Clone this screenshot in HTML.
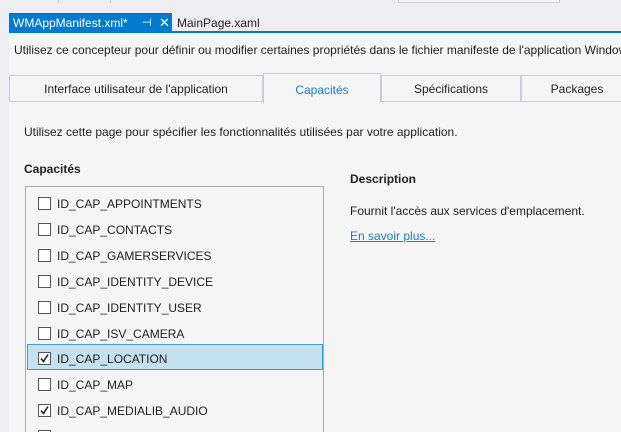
<!DOCTYPE html>
<html><head><meta charset="utf-8"><style>
html,body{margin:0;width:621px;height:432px;overflow:hidden}
body{background:#eeeef2;font-family:"Liberation Sans",sans-serif;font-size:12px;color:#1e1e1e;position:relative}
.a{position:absolute}
.cb{position:absolute;left:38px;width:11px;height:11px;border:1px solid #555;background:#fff}
.it{position:absolute;left:57px}
.tab{position:absolute;top:75px;height:25px;border:1px solid #ccccd4;border-bottom:none;background:#f5f5f5;text-align:center;line-height:27px;color:#1e1e1e}
</style></head><body>
<div class="a" style="left:58px;top:0;width:1px;height:3px;background:#ccc"></div>
<div class="a" style="left:110px;top:0;width:1px;height:3px;background:#ccc"></div>
<div class="a" style="left:398px;top:0;width:160px;height:2px;border:1px solid #ccc;border-top:none;background:#f5f5f5"></div>
<div class="a" style="left:9px;top:13px;width:163px;height:19px;background:#007acc;color:#fff;line-height:20px">
<span style="position:absolute;left:4px">WMAppManifest.xml*</span>
<span style="position:absolute;left:133px;font-size:11px">⊣</span>
<span style="position:absolute;left:150px;font-size:13px">✕</span></div>
<div class="a" style="left:177px;top:13px;line-height:20px">MainPage.xaml</div>
<div class="a" style="left:9px;top:31px;width:612px;height:2px;background:#007acc"></div>
<div class="a" style="left:9px;top:33px;width:612px;height:399px;background:#f5f5f5"></div>
<div class="a" style="left:14px;top:43px;white-space:nowrap">Utilisez ce concepteur pour définir ou modifier certaines propriétés dans le fichier manifeste de l'application Windows</div>
<div class="tab" style="left:9px;width:252px">Interface utilisateur de l'application</div>
<div class="tab" style="left:263px;top:73px;height:29px;width:116px;background:#f5f5f5;color:#1a7bc6;line-height:33px">Capacités</div>
<div class="tab" style="left:381px;width:138px">Spécifications</div>
<div class="tab" style="left:521px;width:110px">Packages</div>
<div class="a" style="left:9px;top:101px;width:254px;height:1px;background:#ccccd4"></div>
<div class="a" style="left:380px;top:101px;width:241px;height:1px;background:#ccccd4"></div>
<div class="a" style="left:24px;top:125px">Utilisez cette page pour spécifier les fonctionnalités utilisées par votre application.</div>
<div class="a" style="left:24px;top:162px;font-weight:bold">Capacités</div>
<div class="a" style="left:350px;top:172px;font-weight:bold">Description</div>
<div class="a" style="left:350px;top:204px">Fournit l'accès aux services d'emplacement.</div>
<div class="a" style="left:350px;top:229px;color:#1a7bc6;text-decoration:underline">En savoir plus...</div>
<div class="a" style="left:25px;top:186px;width:297px;height:250px;border:1px solid #a8a8b0;background:#f5f5f5"></div>
<div class="a" style="left:27px;top:344px;width:294px;height:24px;background:#c5e0ee;border:1px solid #3c9fdc"></div>
<div class="cb" style="top:197px"></div><div class="it" style="top:197px">ID_CAP_APPOINTMENTS</div>
<div class="cb" style="top:223px"></div><div class="it" style="top:223px">ID_CAP_CONTACTS</div>
<div class="cb" style="top:249px"></div><div class="it" style="top:249px">ID_CAP_GAMERSERVICES</div>
<div class="cb" style="top:275px"></div><div class="it" style="top:275px">ID_CAP_IDENTITY_DEVICE</div>
<div class="cb" style="top:301px"></div><div class="it" style="top:301px">ID_CAP_IDENTITY_USER</div>
<div class="cb" style="top:327px"></div><div class="it" style="top:327px">ID_CAP_ISV_CAMERA</div>
<div class="cb" style="top:352px"><svg width="11" height="11" style="position:absolute;left:0;top:0"><path d="M2 5.5L4.5 8.5L9 1.5" stroke="#222" stroke-width="1.6" fill="none"/></svg></div><div class="it" style="top:352px">ID_CAP_LOCATION</div>
<div class="cb" style="top:378px"></div><div class="it" style="top:378px">ID_CAP_MAP</div>
<div class="cb" style="top:404px"><svg width="11" height="11" style="position:absolute;left:0;top:0"><path d="M2 5.5L4.5 8.5L9 1.5" stroke="#222" stroke-width="1.6" fill="none"/></svg></div><div class="it" style="top:404px">ID_CAP_MEDIALIB_AUDIO</div>
<div class="cb" style="top:430px"></div>
</body></html>
